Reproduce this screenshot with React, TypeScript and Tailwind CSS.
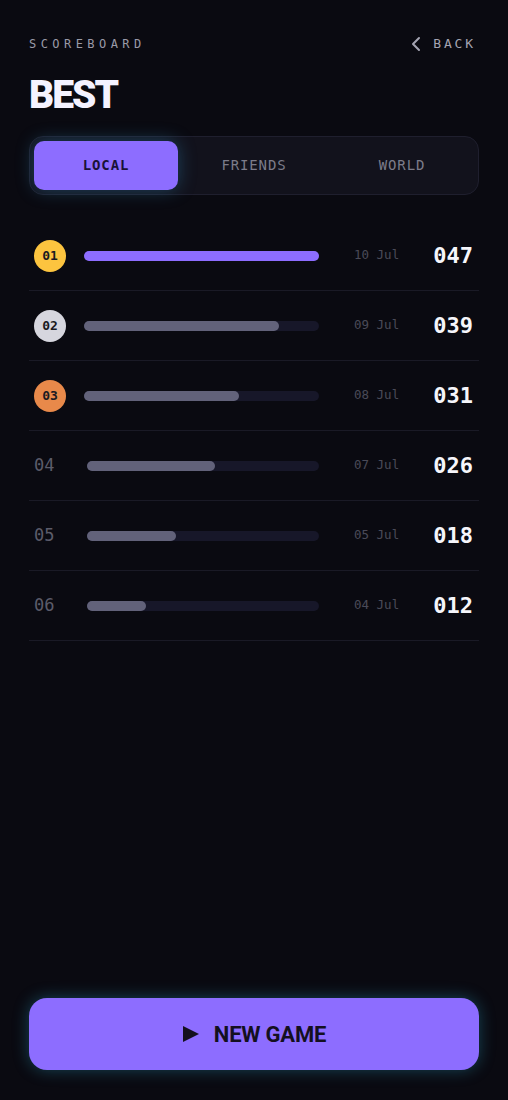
import React from 'react';

type Row = { rank: string; date: string; score: number; medal?: string };

const rows: Row[] = [
  { rank: '01', date: '10 Jul', score: 47, medal: 'bg-[#fcc43f]' },
  { rank: '02', date: '09 Jul', score: 39, medal: 'bg-[#d6d6de]' },
  { rank: '03', date: '08 Jul', score: 31, medal: 'bg-[#e8894a]' },
  { rank: '04', date: '07 Jul', score: 26 },
  { rank: '05', date: '05 Jul', score: 18 },
  { rank: '06', date: '04 Jul', score: 12 },
];

const best = 47;
const mono = "font-['DejaVu_Sans_Mono','Liberation_Mono',monospace]";

const App: React.FC = () => {
  return (
    <div className="min-h-[1100px] bg-[#0a0a11] flex flex-col px-[29px] pt-[35px] pb-[30px]">
      {/* Header */}
      <div className="flex items-center justify-between h-[18px]">
        <span className={`${mono} text-[12px] tracking-[0.37em] text-[#9a9aa8]`}>SCOREBOARD</span>
        <button className={`${mono} flex items-center gap-[12px] text-[13px] tracking-[0.22em] text-[#a4a4b2] pr-[3px]`}>
          <svg width="10" height="16" viewBox="0 0 10 16" fill="none">
            <path d="M8 2 L2 8 L8 14" stroke="#a4a4b2" strokeWidth="2" strokeLinecap="round" strokeLinejoin="round" />
          </svg>
          BACK
        </button>
      </div>

      <h1 className="mt-[22px] font-['Roboto','Liberation_Sans',sans-serif] font-black text-[39px] leading-[40px] tracking-[-0.05em] text-[#f4f2ff]">
        BEST
      </h1>

      {/* Tabs */}
      <div className="mt-[21px] rounded-[14px] bg-[#12121c] border border-[#1f1f2e] p-[4px] grid grid-cols-3 gap-[4px]">
        <div className={`${mono} h-[49px] rounded-[10px] bg-[#8d6dff] flex items-center justify-center text-[14px] font-bold tracking-[0.06em] text-[#1a1238] shadow-[0_0_18px_rgba(50,140,190,0.4)]`}>
          LOCAL
        </div>
        <div className={`${mono} h-[49px] flex items-center justify-center text-[14px] tracking-[0.06em] text-[#7c7c8a]`}>
          FRIENDS
        </div>
        <div className={`${mono} h-[49px] flex items-center justify-center text-[14px] tracking-[0.06em] text-[#7c7c8a]`}>
          WORLD
        </div>
      </div>

      {/* List */}
      <div className="mt-[26px] flex flex-col">
        {rows.map((r, i) => (
          <div key={r.rank} className="h-[70px] flex items-center border-b border-[#1a1a26] pl-[5px] pr-[6px]">
            {r.medal ? (
              <div className="w-[50px] shrink-0">
                <div className={`${mono} w-[32px] h-[32px] rounded-full ${r.medal} flex items-center justify-center text-[13px] font-bold text-[#1a1a22]`}>
                  {r.rank}
                </div>
              </div>
            ) : (
              <div className={`${mono} w-[53px] shrink-0 text-[17px] text-[#5c5c6a]`}>{r.rank}</div>
            )}
            <div className="flex-1 h-[10px] rounded-full bg-[#171729]">
              <div
                className={`h-full rounded-full ${i === 0 ? 'bg-[#8d6dff]' : 'bg-[#62627a]'}`}
                style={{ width: `${(r.score / best) * 100}%` }}
              />
            </div>
            <div className={`${mono} ml-[35px] w-[46px] text-[12.5px] text-[#4a4a58]`}>{r.date}</div>
            <div className={`${mono} w-[73px] text-right text-[22px] font-bold text-[#f6f6fb]`}>
              {String(r.score).padStart(3, '0')}
            </div>
          </div>
        ))}
      </div>

      <div className="flex-1" />

      {/* New game */}
      <button className="h-[72px] rounded-[18px] bg-[#8d6dff] flex items-center justify-center gap-[14px] shadow-[0_0_16px_rgba(40,140,170,0.45)]">
        <svg width="18" height="18" viewBox="0 0 18 18">
          <path d="M1 1 L17 9 L1 17 Z" fill="#14101f" />
        </svg>
        <span className="font-['Roboto','Liberation_Sans',sans-serif] font-bold text-[22px] tracking-[-0.01em] text-[#14101f]">
          NEW GAME
        </span>
      </button>
    </div>
  );
};

export default App;
